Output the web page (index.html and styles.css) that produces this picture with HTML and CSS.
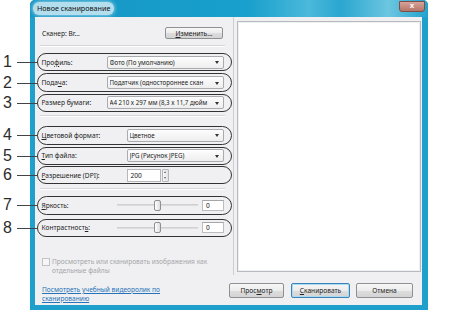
FILE: index.html
```html
<!DOCTYPE html>
<html lang="ru">
<head>
  <meta charset="UTF-8" />
  <title>Новое сканирование</title>
  <link rel="stylesheet" href="styles.css">
</head>
<body>
  <div class="window">
    <div class="titlebar">
      <span class="title">Новое сканирование</span>
      <span class="close">x</span>
    </div>

    <div class="client">
      <div class="main">
        <section class="settings">
          <div class="scanner">
            <span>Сканер: Br...</span>
            <button class="btn btn-change"><u>И</u>зменить...</button>
          </div>
          <div class="sep"></div>

          <div class="callout first">
            <span class="num">1</span>
            <span class="lbl w65">Про<u>ф</u>иль:</span>
            <div class="combo"><span>Фото (По умолчанию)</span></div>
          </div>
          <div class="callout">
            <span class="num">2</span>
            <span class="lbl w65">Пода<u>ч</u>а:</span>
            <div class="combo"><span>Податчик (одностороннее скан</span></div>
          </div>
          <div class="callout">
            <span class="num">3</span>
            <span class="lbl w65">Размер бумаги:</span>
            <div class="combo"><span>A4 210 x 297 мм (8,3 x 11,7 дюйм</span></div>
          </div>
          <div class="sep sep-mid"></div>

          <div class="callout second">
            <span class="num">4</span>
            <span class="lbl w85"><u>Ц</u>ветовой формат:</span>
            <div class="combo"><span>Цветное</span></div>
          </div>
          <div class="callout">
            <span class="num">5</span>
            <span class="lbl w85"><u>Т</u>ип файла:</span>
            <div class="combo"><span>JPG (Рисунок JPEG)</span></div>
          </div>
          <div class="callout tight">
            <span class="num">6</span>
            <span class="lbl w85"><u>Р</u>азрешение (DPI):</span>
            <div class="spinbox">
              <div class="spin-input">200</div>
              <div class="spin-btns"><span class="up"></span><span class="down"></span></div>
            </div>
          </div>
          <div class="sep sep-low"></div>

          <div class="callout third">
            <span class="num">7</span>
            <span class="lbl w75"><u>Я</u>ркость:</span>
            <div class="slider"><span class="thumb"></span></div>
            <div class="numbox">0</div>
          </div>
          <div class="callout fourth">
            <span class="num">8</span>
            <span class="lbl w75">Контрастност<u>ь</u>:</span>
            <div class="slider"><span class="thumb"></span></div>
            <div class="numbox">0</div>
          </div>

          <label class="check">
            <span class="box"></span>
            <span>Просмотреть или сканировать изображения как<br>отдельные файлы</span>
          </label>
        </section>

        <section class="preview-pane">
          <div class="preview"></div>
        </section>
      </div>

      <div class="footer">
        <a class="link" href="#">Посмотреть учебный видеоролик по<br>сканированию</a>
        <div class="actions">
          <button class="btn w55">Прос<u>м</u>отр</button>
          <button class="btn btn-default w59"><u>С</u>канировать</button>
          <button class="btn w57">Отмена</button>
        </div>
      </div>
    </div>
  </div>
</body>
</html>
```

FILE: styles.css
```css
* {
  box-sizing: border-box;
  margin: 0;
  padding: 0;
}
body {
  width: 450px;
  height: 315px;
  background: #fff;
  font-family: 'Noto Sans', sans-serif;
  font-size: 6.6px;
  color: #222;
  overflow: hidden;
}
u {
  text-decoration: underline;
}

/* window frame */
.window {
  margin-left: 30px;
  width: 398px;
  height: 310px;
  display: flex;
  flex-direction: column;
  background: #1e9fcc;
  border-radius: 5px 5px 0 0;
}
.titlebar {
  height: 17px;
  display: flex;
  justify-content: space-between;
  align-items: flex-start;
  padding: 1px 3px 0 3px;
  border-radius: 5px 5px 0 0;
  background: linear-gradient(90deg, #1595c4 0%, #19a0cc 55%, #4bb9da 70%, #2aa6d0 78%, #6cc6e0 90%, #22a2ce 100%);
}
.title {
  margin-top: 1px;
  padding: 0 4px;
  line-height: 13px;
  font-size: 7.2px;
  color: #111;
  background: rgba(232, 246, 251, 0.75);
  border-radius: 6px;
  box-shadow: 0 0 4px rgba(232, 246, 251, 0.8);
}
.close {
  width: 26px;
  height: 11px;
  background: linear-gradient(#d6a39a, #b57468);
  border: 1px solid #7f4f47;
  border-radius: 0 0 3px 3px;
  color: #fff;
  font-family: 'Liberation Sans', sans-serif;
  font-size: 8px;
  font-weight: bold;
  line-height: 8px;
  text-align: center;
}
.client {
  flex: 1;
  margin: 0 6px 5px 5px;
  background: #f0f0f2;
  display: flex;
  flex-direction: column;
}
.main {
  height: 258px;
  display: flex;
}

/* left settings column */
.settings {
  width: 199px;
  border-right: 1px solid #cdced2;
  padding: 10px 1px 0 2px;
  display: flex;
  flex-direction: column;
}
.scanner {
  height: 12px;
  display: flex;
  justify-content: space-between;
  align-items: center;
  padding: 0 9px 0 5px;
}
.sep {
  height: 2px;
  margin: 6px 7px 0 3px;
  border-top: 1px solid #d6d6d8;
  border-bottom: 1px solid #fff;
}
.sep-mid {
  margin-top: 3px;
}
.sep-low {
  margin-top: 4px;
}
.callout {
  position: relative;
  height: 19px;
  margin-top: 2px;
  display: flex;
  align-items: center;
  padding: 0 7px 0 3.5px;
  border: 1.5px solid #333;
  border-radius: 10px;
}
.callout.first {
  margin-top: 6px;
}
.callout.second {
  margin-top: 9px;
}
.callout.tight {
  margin-top: 1px;
}
.callout.third {
  margin-top: 6px;
}
.callout.fourth {
  margin-top: 4px;
}
.callout::before {
  content: "";
  position: absolute;
  left: -21.5px;
  top: 50%;
  width: 21px;
  height: 1px;
  background: #444;
}
.num {
  position: absolute;
  left: -35px;
  top: 50%;
  transform: translateY(-50%);
  width: 9px;
  text-align: center;
  font-family: 'Liberation Sans', sans-serif;
  font-size: 16px;
  line-height: 16px;
  color: #2b2b2b;
}
.lbl {
  flex: none;
  white-space: nowrap;
}
.w65 { width: 65px; }
.w75 { width: 75px; }
.w85 { width: 85px; }

.combo {
  position: relative;
  flex: 1;
  min-width: 0;
  height: 13px;
  line-height: 11px;
  padding: 0 10px 0 2px;
  font-size: 6.2px;
  background: linear-gradient(#fdfdfd, #eeeeef);
  border: 1px solid #a9abae;
  border-radius: 2px;
}
.combo span {
  display: block;
  white-space: nowrap;
  overflow: hidden;
}
.combo::after {
  content: "";
  position: absolute;
  right: 4px;
  top: 4.5px;
  border-left: 2.5px solid transparent;
  border-right: 2.5px solid transparent;
  border-top: 3px solid #333;
}
.spinbox {
  display: flex;
  height: 13px;
}
.spin-input {
  width: 34px;
  line-height: 11px;
  padding-left: 3px;
  background: #fff;
  border: 1px solid #b5b7ba;
}
.spin-btns {
  width: 7px;
  margin-left: 1px;
  display: flex;
  flex-direction: column;
  border: 1px solid #b5b7ba;
  border-radius: 1px;
  background: linear-gradient(90deg, #f7f7f7, #e3e3e3);
}
.spin-btns span {
  flex: 1;
  display: flex;
  align-items: center;
  justify-content: center;
}
.spin-btns .up::after {
  content: "";
  border-left: 1.5px solid transparent;
  border-right: 1.5px solid transparent;
  border-bottom: 2px solid #666;
}
.spin-btns .down::after {
  content: "";
  border-left: 1.5px solid transparent;
  border-right: 1.5px solid transparent;
  border-top: 2px solid #666;
}
.slider {
  flex: 1;
  height: 12px;
  display: flex;
  align-items: center;
  justify-content: center;
  background: linear-gradient(#cbcbcd, #e2e2e4) center / 100% 2px no-repeat;
}
.thumb {
  width: 7px;
  height: 11px;
  border: 1px solid #8d8f92;
  border-radius: 2px;
  background: linear-gradient(90deg, #ffffff, #dcdcdc);
}
.numbox {
  width: 22px;
  height: 11px;
  margin-left: 4px;
  line-height: 9px;
  padding-left: 3px;
  background: #fff;
  border: 1px solid #bbbdc0;
  border-top-color: #a4a6a9;
}
.check {
  margin-top: 20px;
  padding-left: 5px;
  display: flex;
  gap: 2px;
  line-height: 9px;
  white-space: nowrap;
  color: #a5a5a8;
}
.check .box {
  flex: none;
  width: 8px;
  height: 8px;
  margin-top: 1px;
  border: 1px solid #c2c3c6;
  background: #f6f6f7;
}

/* preview */
.preview-pane {
  flex: 1;
  padding: 4px 1px 3px 3px;
}
.preview {
  height: 100%;
  background: #fff;
  border: 1px solid #b7babf;
  box-shadow: inset 0 0 0 1px #eef0f2;
}

/* bottom */
.footer {
  flex: 1;
  display: flex;
  justify-content: space-between;
  padding: 0 9px 0 7px;
}
.link {
  padding-top: 10px;
  line-height: 9px;
  color: #2573b8;
  text-decoration: underline;
}
.actions {
  padding-top: 8px;
  display: flex;
  gap: 6px;
}
.btn {
  height: 15px;
  font-family: 'Noto Sans', sans-serif;
  font-size: 6.6px;
  color: #222;
  background: linear-gradient(#f7f7f7 0%, #ececec 50%, #dddddd 51%, #d4d4d4 100%);
  border: 1px solid #8e9093;
  border-radius: 2px;
}
.btn-change {
  width: 58px;
  height: 12px;
}
.btn-default {
  border-color: #3c84b8;
  box-shadow: inset 0 0 0 1px #a9dbf2;
}
.w55 { width: 55px; }
.w59 { width: 59px; margin-left: 1px; }
.w57 { width: 57px; }
```
